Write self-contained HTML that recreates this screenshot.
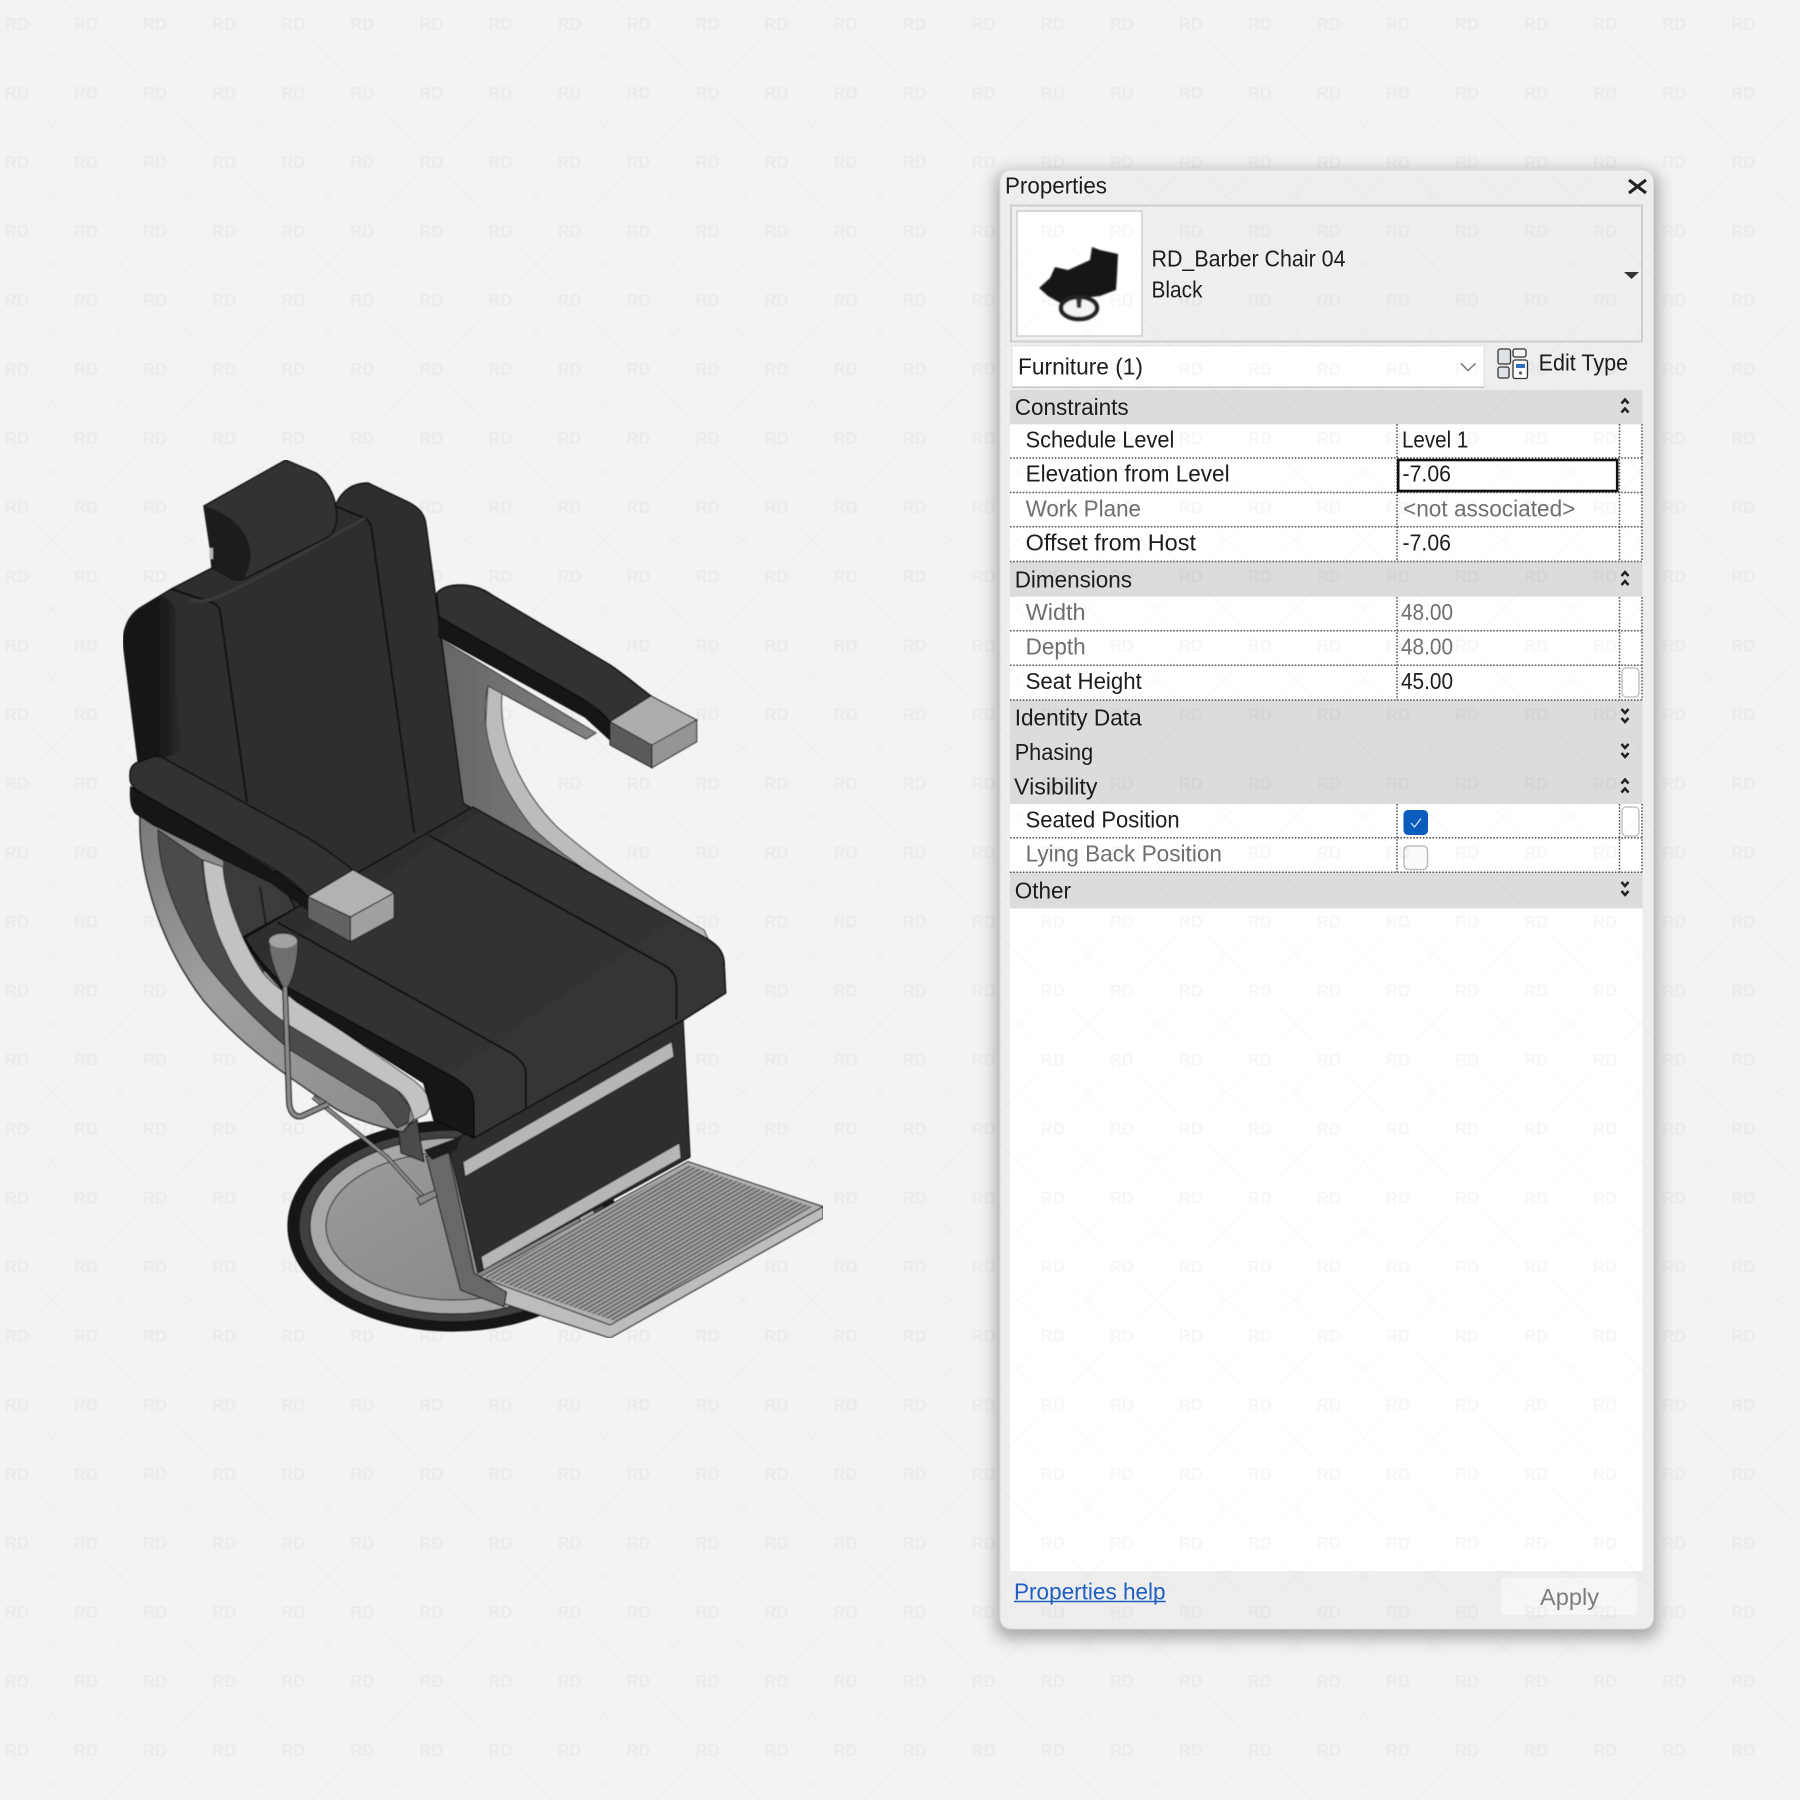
<!DOCTYPE html>
<html><head><meta charset="utf-8"><title>Properties</title>
<style>html,body{margin:0;padding:0;background:#f3f3f3}svg{display:block}
text{font-family:"Liberation Sans",Arial,sans-serif;font-size:23px;fill:#1c1c1c}
.g{fill:#6f6f6f}</style></head><body>
<svg xmlns="http://www.w3.org/2000/svg" width="1800" height="1800" viewBox="0 0 1800 1800">
<defs>
<pattern id="wm" width="69.05" height="69.05" patternUnits="userSpaceOnUse">
<text x="5" y="29.8" textLength="24" lengthAdjust="spacingAndGlyphs" style="font-size:17px;font-weight:bold;fill:#000;fill-opacity:.032">RD</text>
<path d="M33 38L71 76M71 38L33 76M-36 38L2 76M2 38L-36 76M33 -31L71 7M71 -31L33 7M-36 -31L2 7M2 -31L-36 7" stroke="#000" stroke-opacity=".022" stroke-width="1" fill="none"/>
</pattern>
<filter id="sh" x="-10%" y="-10%" width="120%" height="120%"><feGaussianBlur stdDeviation="8"/></filter>
<filter id="soft" x="0" y="0" width="100%" height="100%"><feGaussianBlur stdDeviation=".45"/></filter>
<filter id="thumb" x="-10%" y="-10%" width="120%" height="120%"><feGaussianBlur stdDeviation=".9"/></filter>
<pattern id="grill" width="3.7" height="3.7" patternUnits="userSpaceOnUse" patternTransform="rotate(-30.5)"><rect width="3.7" height="3.7" fill="#a2a2a2"/><rect width="3.7" height="1.5" fill="#5a5a5a"/></pattern>
<linearGradient id="lf" x1="0" y1="0" x2="1" y2="1"><stop offset="0" stop-color="#7a7a7a"/><stop offset=".4" stop-color="#a0a0a0"/><stop offset="1" stop-color="#8a8a8a"/></linearGradient>
<linearGradient id="rf" x1="0" y1="0" x2="1" y2="0"><stop offset="0" stop-color="#666"/><stop offset=".5" stop-color="#7c7c7c"/><stop offset="1" stop-color="#999"/></linearGradient>
<linearGradient id="disc" x1="0" y1="0" x2="1" y2="1"><stop offset="0" stop-color="#9c9c9c"/><stop offset="1" stop-color="#858585"/></linearGradient>
<linearGradient id="top" x1="0" y1="0" x2="1" y2="1"><stop offset="0" stop-color="#2d2d2d"/><stop offset="1" stop-color="#383838"/></linearGradient>
<linearGradient id="side" gradientUnits="userSpaceOnUse" x1="124" y1="0" x2="182" y2="0"><stop offset="0" stop-color="#181818"/><stop offset=".7" stop-color="#1a1a1a"/><stop offset="1" stop-color="#2f2f2f"/></linearGradient>
</defs>
<rect width="1800" height="1800" fill="#f3f3f3"/>

<!-- panel -->
<rect x="996" y="172" width="662" height="1466" rx="12" fill="#000" fill-opacity=".32" filter="url(#sh)"/>
<rect x="1000" y="170" width="653.5" height="1459" rx="11" fill="#eeeeee" stroke="#dadada"/>
<text x="1005" y="193.3" textLength="102" lengthAdjust="spacingAndGlyphs">Properties</text>
<path d="M1629 180L1646 193M1646 180L1629 193" stroke="#222" stroke-width="3" fill="none"/>
<rect x="1011" y="205.5" width="631" height="136" fill="#efefef" stroke="#cecece" stroke-width="2"/>
<rect x="1017" y="211" width="125" height="125" fill="#fff" stroke="#cfcfcf" stroke-width="1.5"/>
<g filter="url(#thumb)">
<path d="M1092 247L1100 250L1118 254L1117 275L1116 290L1100 296L1083 298L1075 300L1062 304L1048 296L1039 288L1050 278L1055 267L1068 270L1090 260Z" fill="#141414"/>
<ellipse cx="1079" cy="308" rx="18" ry="11" fill="#f4f4f4" stroke="#222" stroke-width="4.5"/>
<path d="M1076 298L1082 298L1081 308L1077 308Z" fill="#333"/>
</g>
<text x="1151.5" y="266.7" textLength="194" lengthAdjust="spacingAndGlyphs">RD_Barber Chair 04</text>
<text x="1151.5" y="297.3" textLength="51" lengthAdjust="spacingAndGlyphs">Black</text>
<path d="M1624 272H1639L1631.5 279Z" fill="#333"/>
<rect x="1012" y="346" width="472" height="41" fill="#fff" stroke="#e2e2e2"/>
<path d="M1012 387.3H1484" stroke="#c6c6c6" stroke-width="1.5"/>
<text x="1018" y="374.3" textLength="125" lengthAdjust="spacingAndGlyphs">Furniture (1)</text>
<path d="M1461 363.5L1468 370.5L1475.5 363.5" stroke="#777" stroke-width="1.5" fill="none"/>
<g stroke="#333" stroke-width="1.3"><rect x="1498" y="349" width="12.5" height="15" rx="2" fill="#dfe2e6"/><rect x="1513" y="349" width="13" height="8" rx="2" fill="#f4f4f4"/><rect x="1498" y="367" width="11" height="11" rx="2" fill="#dfe2e6"/><rect x="1513" y="360" width="14.5" height="18.5" rx="2" fill="#fff"/></g>
<rect x="1516" y="364" width="9" height="4" fill="#2f6fc0"/><circle cx="1520.5" cy="373" r="1.6" fill="#555"/>
<text x="1538.6" y="370.7" textLength="89.5" lengthAdjust="spacingAndGlyphs">Edit Type</text>

<!-- table -->
<rect x="1010" y="390" width="632.5" height="518.5" fill="#dcdcdc"/>
<rect x="1010" y="424.3" width="632.5" height="137.3" fill="#fff"/>
<rect x="1010" y="596.7" width="632.5" height="103.3" fill="#fff"/>
<rect x="1010" y="804" width="632.5" height="68.3" fill="#fff"/>
<rect x="1010" y="908.5" width="632.5" height="662.5" fill="#fff"/>

<g stroke="#555" stroke-width="1.5" stroke-dasharray="1.6 1.6" fill="none">
<path d="M1010 458H1642M1010 492.5H1642M1010 526.7H1642M1010 561.5H1642M1010 630.7H1642M1010 665.3H1642M1010 700H1642M1010 837.7H1642M1010 872.3H1642"/>
<path d="M1397 424V561.5M1619.5 424V561.5M1642 424V561.5M1397 597V700M1619.5 597V700M1642 597V700M1397 804V872.3M1619.5 804V872.3M1642 804V872.3"/>
</g>
<rect x="1398.2" y="460" width="219" height="31" fill="#fff" stroke="#111" stroke-width="2.6"/>

<text x="1014.7" y="415" textLength="114" lengthAdjust="spacingAndGlyphs">Constraints</text>
<text x="1025.6" y="447.3" textLength="148.7" lengthAdjust="spacingAndGlyphs">Schedule Level</text>
<text x="1025.6" y="481.7" textLength="204" lengthAdjust="spacingAndGlyphs">Elevation from Level</text>
<text class="g" x="1025.6" y="516.7" textLength="115.4" lengthAdjust="spacingAndGlyphs">Work Plane</text>
<text x="1025.6" y="550.7" textLength="170.4" lengthAdjust="spacingAndGlyphs">Offset from Host</text>
<text x="1402" y="447.3" textLength="66.3" lengthAdjust="spacingAndGlyphs">Level 1</text>
<text x="1402.5" y="481.7" textLength="48.5" lengthAdjust="spacingAndGlyphs">-7.06</text>
<text class="g" x="1403" y="516.7" textLength="172.4" lengthAdjust="spacingAndGlyphs">&lt;not associated&gt;</text>
<text x="1402.5" y="550.7" textLength="48.5" lengthAdjust="spacingAndGlyphs">-7.06</text>

<text x="1014.7" y="587.3" textLength="117.3" lengthAdjust="spacingAndGlyphs">Dimensions</text>
<text class="g" x="1025.6" y="620" textLength="60" lengthAdjust="spacingAndGlyphs">Width</text>
<text class="g" x="1025.6" y="654.3" textLength="60" lengthAdjust="spacingAndGlyphs">Depth</text>
<text x="1025.6" y="689" textLength="116.2" lengthAdjust="spacingAndGlyphs">Seat Height</text>
<text class="g" x="1401" y="620" textLength="52" lengthAdjust="spacingAndGlyphs">48.00</text>
<text class="g" x="1401" y="654.3" textLength="52" lengthAdjust="spacingAndGlyphs">48.00</text>
<text x="1401" y="689" textLength="52" lengthAdjust="spacingAndGlyphs">45.00</text>
<text x="1014.7" y="725.7" textLength="127" lengthAdjust="spacingAndGlyphs">Identity Data</text>
<text x="1014.7" y="760" textLength="78.5" lengthAdjust="spacingAndGlyphs">Phasing</text>
<text x="1014" y="794.3" textLength="83.5" lengthAdjust="spacingAndGlyphs">Visibility</text>
<text x="1025.6" y="827.3" textLength="154" lengthAdjust="spacingAndGlyphs">Seated Position</text>
<text class="g" x="1025.6" y="861.7" textLength="196.4" lengthAdjust="spacingAndGlyphs">Lying Back Position</text>
<text x="1014.7" y="898.3" textLength="56.3" lengthAdjust="spacingAndGlyphs">Other</text>

<g fill="none" stroke="#222" stroke-width="2.5">
<path d="M1621.5 403.5L1625 399.5L1628.5 403.5M1621.5 412.5L1625 408.5L1628.5 412.5"/>
<path d="M1621.5 576L1625 572L1628.5 576M1621.5 585L1625 581L1628.5 585"/>
<path d="M1621.5 709L1625 713L1628.5 709M1621.5 718L1625 722L1628.5 718"/>
<path d="M1621.5 744L1625 748L1628.5 744M1621.5 753L1625 757L1628.5 753"/>
<path d="M1621.5 783.5L1625 779.5L1628.5 783.5M1621.5 792.5L1625 788.5L1628.5 792.5"/>
<path d="M1621.5 882L1625 886L1628.5 882M1621.5 891L1625 895L1628.5 891"/>
</g>
<rect x="1622" y="668" width="17" height="29" rx="4" fill="#fff" stroke="#c4c4c4" stroke-width="1.5"/>
<rect x="1622" y="807" width="17" height="29" rx="4" fill="#fff" stroke="#c4c4c4" stroke-width="1.5"/>
<rect x="1403.5" y="810" width="24.5" height="25" rx="4.5" fill="#0a5cbd"/>
<path d="M1411 823L1414.5 827L1421 818.5" fill="none" stroke="#cfe0f6" stroke-width="1.3"/>
<rect x="1404" y="846" width="23.5" height="23.5" rx="4.5" fill="#fafafa" stroke="#bdbdbd" stroke-width="1.5"/>

<text x="1014" y="1599.3" textLength="151.6" lengthAdjust="spacingAndGlyphs" style="fill:#1f5fc2">Properties help</text>
<path d="M1014 1601.5H1165.6" stroke="#1f5fc2" stroke-width="1.6"/>
<rect x="1501" y="1578" width="136" height="37" rx="4" fill="#f6f6f6"/>
<text x="1540" y="1605" textLength="59" lengthAdjust="spacingAndGlyphs" style="fill:#7d7d7d">Apply</text>

<!-- watermark over page and panel -->
<rect width="1800" height="1800" fill="url(#wm)"/>

<g filter="url(#soft)">
<!-- chair: base disc -->
<g stroke="#111" stroke-width="1.2">
<ellipse cx="453" cy="1226" rx="165" ry="105" fill="#161616"/>
<ellipse cx="453" cy="1226" rx="154" ry="96" fill="#3f3f3f"/>
<ellipse cx="453" cy="1226" rx="143" ry="88" fill="#a8a8a8" stroke="#222"/>
<ellipse cx="453" cy="1226" rx="127" ry="74" fill="url(#disc)" stroke="#3a3a3a"/>
</g>
<!-- base panel -->
<path d="M448 1143L683 1018L690 1157L478 1273Z" fill="#2e2e2e" stroke="#111" stroke-width="1.2"/>
<path d="M463 1162L671.8 1041.7L674 1056.7L465 1176.7Z" fill="#b6b6b6" stroke="#222"/>
<path d="M481 1256.7L679.6 1143L681 1158L483.5 1270Z" fill="#b6b6b6" stroke="#222"/>
<!-- footrest -->
<path d="M610 1325L823 1206.7V1218L610 1338L505 1304L480 1277Z" fill="#bdbdbd" stroke="#222" stroke-width="1.2"/>
<path d="M688 1161.7L823 1206.7L610 1325L480 1277Z" fill="#b0b0b0" stroke="#333" stroke-width="1.2"/>
<path d="M688 1165L812 1206.7L617 1321.7L483.5 1276.7Z" fill="url(#grill)"/>
<!-- steel arm -->
<path d="M426 1156L449 1153L474 1273L506.5 1292L504 1306.7L460.6 1290Z" fill="#686868" stroke="#1c1c1c" stroke-width="1.2"/>
<path d="M398.6 1131.7L417 1120L424 1161.7L401 1153Z" fill="#4c4c4c" stroke="#1c1c1c" stroke-width="1.2"/>
<path d="M424 1150L462 1136L456 1150L432 1160Z" fill="#1d1d1d"/>
<!-- second rod -->
<path d="M313 1097L387 1157L424 1198" fill="none" stroke="#222" stroke-width="4.4"/>
<path d="M313 1097L387 1157L424 1198" fill="none" stroke="#8a8a8a" stroke-width="2.6"/>
<path d="M417 1198L435 1190L437 1196L420 1205Z" fill="#888" stroke="#222"/>

<!-- right frame -->
<path d="M488 686L502 693C498 740 520 790 557 827C600 865 660 905 704 930L714 952L480 815Z" fill="#bcbcbc" stroke="#333" stroke-width="1"/>
<path d="M442 640L596 733L586 739L488 686C478 730 495 780 532 827C570 865 640 905 690 935L480 815L463 803Z" fill="url(#rf)" stroke="#333" stroke-width="1"/>

<!-- left frame -->
<path d="M140 815C138 880 165 950 203 1000C245 1050 290 1077 333 1107C350 1118 380 1127 403 1132L410 1123L430 1107C428 1090 415 1082 405 1076L297 1000L223 860Z" fill="url(#lf)" stroke="#1c1c1c" stroke-width="1.4"/>
<path d="M158 830C158 870 175 915 203 960C225 990 255 1020 290 1050L377 1103L397 1128L408 1123L410 1107L397 1090L300 1030C260 1005 235 975 207 900L202 860Z" fill="#4c4c4c" stroke="#1c1c1c" stroke-width="1"/>
<path d="M223 850L340 900L296 950L263 973C240 940 225 895 223 867Z" fill="#3a3a3a"/>
<path d="M260 887L266 925" stroke="#111" stroke-width="1.5"/>
<path d="M203 860L223 867C225 895 240 940 263 973C275 988 290 995 300 1002L410 1078C422 1086 430 1095 430 1107L426 1114L414 1120C410 1103 405 1096 397 1090L297 1030C263 1010 240 985 225 950C212 925 205 890 203 860Z" fill="#c2c2c2" stroke="#2a2a2a" stroke-width="1"/>

<!-- back -->
<path d="M336 504C342 491 352 483 368 483L408 502C420 508 425 515 426 525L463.3 803L478 812L300 918L240 800L138.8 766.7L123.7 646.7C122 630 128 616 140 608L171.4 589L212 568Z" fill="#2f2f2f" stroke="#0c0c0c" stroke-width="1.4"/>
<path d="M123.7 646.7C122 630 128 616 140 608L160 596C175 600 178 610 176 625L176 690L182 752L139 766Z" fill="url(#side)"/>
<path d="M171.4 589L214.3 603.3C218 606 220 610 220.4 613.3L247 802" fill="none" stroke="#0c0c0c" stroke-width="1.8"/>
<path d="M336.7 506.7L365.3 518.3C369 521 371 525 371.4 528.3L414.3 833" fill="none" stroke="#0c0c0c" stroke-width="1.8"/>
<path d="M190 600C210 605 225 597 365 518" fill="none" stroke="#3a3a3a" stroke-width="3"/>

<!-- seat -->
<path d="M243 937L296 908L473 807L704 937C716 944 723 950 724 962L725.5 993L683 1020L474 1138L434 1120L424 1083L297 1002C275 985 255 960 243 937Z" fill="#161616" stroke="#0c0c0c" stroke-width="1.6"/>
<path d="M245 938L296 908L473 807L704 937C716 944 723 950 724 962L725.5 993L683 1020L474 1138L474 1105C474 1090 466 1086 455 1078L287 987C268 972 255 955 245 938Z" fill="url(#top)" stroke="#0c0c0c" stroke-width="1.4"/>
<path d="M428.6 835L667 967C674 972 676.4 978 676.4 985V1020" fill="none" stroke="#0c0c0c" stroke-width="1.8"/>
<path d="M277 922L511 1053C520 1059 525.8 1066 525.8 1073V1108" fill="none" stroke="#0c0c0c" stroke-width="1.8"/>

<!-- headrest -->
<path d="M285.7 460L316 473C330 483 337 500 336.7 518C336 528 332 534 328.6 537L246 578C240 581 235 580 231 578L212 568L210 546L204 506Z" fill="#333" stroke="#0c0c0c" stroke-width="1.4"/>
<path d="M204 506C225 512 245 525 250 548C252 560 248 572 243 579C237 581 233 579 212 568L210 546Z" fill="#1d1d1d"/>
<rect x="209.5" y="548" width="3.5" height="11" fill="#b5b5b5"/>

<!-- right arm -->
<path d="M438.8 616.7L577.6 696L610 720V740L585 717L438.8 636.7Z" fill="#141414" stroke="#0c0c0c"/>
<path d="M436.7 593.3C442 587 450 585 460 585C475 585 485 590 491.8 595L610 665C625 675 640 688 651 696L610 721.7C600 710 590 703 577.6 696L438.8 616.7Z" fill="#323232" stroke="#0c0c0c" stroke-width="1.4"/>
<path d="M651 696L696.7 720L651.8 745L610 721.7Z" fill="#adadad" stroke="#1c1c1c"/>
<path d="M651.8 745L696.7 720V741.7L651.8 767.7Z" fill="#959595" stroke="#1c1c1c"/>
<path d="M610 721.7L651.8 745V767.7L610 745Z" fill="#5a5a5a" stroke="#1c1c1c"/>

<!-- left arm -->
<path d="M130.6 786.7L275.5 871.7L308 896.7V910L271.4 883L153 825L135 813C130 806 130 796 130.6 786.7Z" fill="#141414" stroke="#0c0c0c"/>
<path d="M161 756.7L308 838C325 848 340 860 353 870L308 896.7C297 885 287 878 275.5 870L145 795C136 790 130 786 130 778C129.5 770 131 766 136 763L155 756Z" fill="#323232" stroke="#0c0c0c" stroke-width="1.4"/>
<path d="M353 870L394 893L350.4 917L308 896.7Z" fill="#b2b2b2" stroke="#1c1c1c"/>
<path d="M350.4 917L394 893V918L350.4 941.7Z" fill="#a0a0a0" stroke="#1c1c1c"/>
<path d="M308 896.7L350.4 917V941.7L308 918Z" fill="#626262" stroke="#1c1c1c"/>

<!-- lever -->
<path d="M269 942C269 936 275 933 283 933C291 933 298 936 298 942C298 955 295 975 288 987H283C276 975 269 955 269 942Z" fill="#6e6e6e" stroke="#222"/>
<ellipse cx="283" cy="941" rx="14" ry="7" fill="#a2a2a2"/>
<path d="M285 987L289 1100C289 1112 295 1118 302 1116L328 1104" fill="none" stroke="#222" stroke-width="6"/>
<path d="M285 987L289 1100C289 1112 295 1118 302 1116L328 1104" fill="none" stroke="#8a8a8a" stroke-width="3.6"/>
</g>
</svg>
</body></html>
